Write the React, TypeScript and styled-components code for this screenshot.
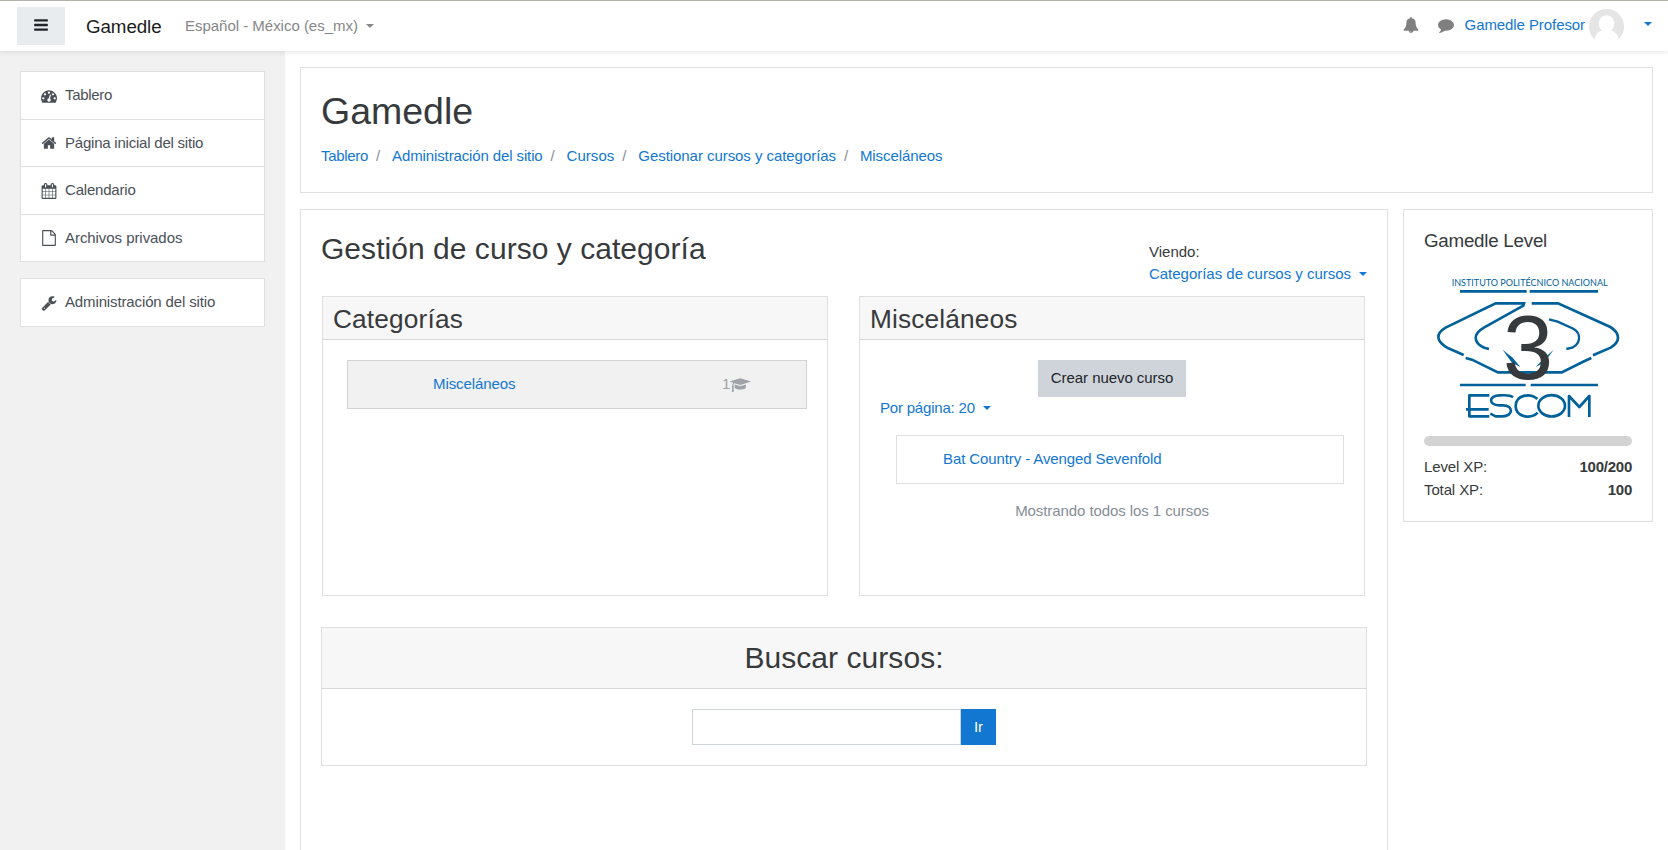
import React from 'react';
import styled, { createGlobalStyle } from 'styled-components';

const GlobalStyle = createGlobalStyle`
  *, *::before, *::after { box-sizing: border-box; }
  html, body, #root { height: 100%; }
  body {
    margin: 0;
    overflow: hidden;
    background: #fff;
    color: #373a3c;
    font: 15px/22.5px "Liberation Sans", Arial, sans-serif;
  }
`;

const glyphs = {
  bars: 'M1664 1344v128q0 26-19 45t-45 19h-1408q-26 0-45-19t-19-45v-128q0-26 19-45t45-19h1408q26 0 45 19t19 45zm0-512v128q0 26-19 45t-45 19h-1408q-26 0-45-19t-19-45v-128q0-26 19-45t45-19h1408q26 0 45 19t19 45zm0-512v128q0 26-19 45t-45 19h-1408q-26 0-45-19t-19-45v-128q0-26 19-45t45-19h1408q26 0 45 19t19 45z',
  dashboard: 'M384 1152q0-53-37.5-90.5t-90.5-37.5-90.5 37.5-37.5 90.5 37.5 90.5 90.5 37.5 90.5-37.5 37.5-90.5zm192-448q0-53-37.5-90.5t-90.5-37.5-90.5 37.5-37.5 90.5 37.5 90.5 90.5 37.5 90.5-37.5 37.5-90.5zm428 481l101-382q6-26-7.5-48.5t-38.5-29.5-48 6.5-30 39.5l-101 382q-60 5-107 43.5t-63 98.5q-20 77 20 146t117 89 146-20 89-117q16-60-6-117t-72-91zm660-33q0-53-37.5-90.5t-90.5-37.5-90.5 37.5-37.5 90.5 37.5 90.5 90.5 37.5 90.5-37.5 37.5-90.5zm-640-640q0-53-37.5-90.5t-90.5-37.5-90.5 37.5-37.5 90.5 37.5 90.5 90.5 37.5 90.5-37.5 37.5-90.5zm448 192q0-53-37.5-90.5t-90.5-37.5-90.5 37.5-37.5 90.5 37.5 90.5 90.5 37.5 90.5-37.5 37.5-90.5zm320 448q0 261-141 483-19 29-54 29h-1402q-35 0-54-29-141-221-141-483 0-182 71-348t191-286 286-191 348-71 348 71 286 191 191 286 71 348z',
  home: 'M1472 992v480q0 26-19 45t-45 19h-384v-384h-256v384h-384q-26 0-45-19t-19-45v-480q0-1 .5-3t.5-3l575-474 575 474q1 2 1 6zm223-69l-62 74q-8 9-21 11h-3q-13 0-21-7l-692-577-692 577q-12 8-24 7-13-2-21-11l-62-74q-8-10-7-23.5t11-21.5l719-599q32-26 76-26t76 26l244 204v-195q0-14 9-23t23-9h192q14 0 23 9t9 23v408l219 182q10 8 11 21.5t-7 23.5z',
  calendar: 'M192 1664h288v-288h-288v288zm352 0h320v-288h-320v288zm-352-352h288v-320h-288v320zm352 0h320v-320h-320v320zm-352-384h288v-288h-288v288zm736 736h320v-288h-320v288zm-384-736h320v-288h-320v288zm768 736h288v-288h-288v288zm-384-352h320v-320h-320v320zm-352-864v-288q0-13-9.5-22.5t-22.5-9.5h-64q-13 0-22.5 9.5t-9.5 22.5v288q0 13 9.5 22.5t22.5 9.5h64q13 0 22.5-9.5t9.5-22.5zm736 864h288v-320h-288v320zm-384-384h320v-288h-320v288zm384 0h288v-288h-288v288zm32-480v-288q0-13-9.5-22.5t-22.5-9.5h-64q-13 0-22.5 9.5t-9.5 22.5v288q0 13 9.5 22.5t22.5 9.5h64q13 0 22.5-9.5t9.5-22.5zm384-64v1280q0 52-38 90t-90 38h-1408q-52 0-90-38t-38-90v-1280q0-52 38-90t90-38h128v-96q0-66 47-113t113-47h64q66 0 113 47t47 113v96h384v-96q0-66 47-113t113-47h64q66 0 113 47t47 113v96h128q52 0 90 38t38 90z',
  file: 'M1596 380q28 28 48 76t20 88v1152q0 40-28 68t-68 28h-1344q-40 0-68-28t-28-68v-1600q0-40 28-68t68-28h896q40 0 88 20t76 48zm-444-244v376h376q-10-29-22-41l-313-313q-12-12-41-22zm384 1528v-1024h-416q-40 0-68-28t-28-68v-416h-768v1536h1280z',
  wrench: 'M448 1472q0-26-19-45t-45-19-45 19-19 45 19 45 45 19 45-19 19-45zm644-420l-682 682q-37 37-90 37-52 0-91-37l-106-108q-38-36-38-90 0-53 38-91l681-681q39 98 114.5 173.5t173.5 114.5zm634-435q0 39-23 106-47 134-164.5 217.5t-258.5 83.5q-185 0-316.5-131.5t-131.5-316.5 131.5-316.5 316.5-131.5q58 0 121.5 16.5t107.5 46.5q16 11 16 28t-16 28l-293 169v224l193 107q5-3 79-48.5t135.5-81 70.5-35.5q15 0 23.5 10t8.5 25z',
  bell: 'M912 1696q0-16-16-16-59 0-101.5-42.5t-42.5-101.5q0-16-16-16t-16 16q0 73 51.5 124.5t124.5 51.5q16 0 16-16zm816-288q0 52-38 90t-90 38h-448q0 106-75 181t-181 75-181-75-75-181h-448q-52 0-90-38t-38-90q50-42 91-88t85-119.5 74.5-158.5 50-206 19.5-260q0-152 117-282.5t307-158.5q-8-19-8-39 0-40 28-68t68-28 68 28 28 68q0 20-8 39 190 28 307 158.5t117 282.5q0 139 19.5 260t50 206 74.5 158.5 85 119.5 91 88z',
  comment: 'M1792 896q0 174-120 321.5t-326 233-450 85.5q-70 0-145-8-198 175-460 242-49 14-114 22-17 2-30.5-9t-17.5-29v-1q-3-4-.5-12t2-10 4.5-9.5l6-9 7-8.5 8-9q7-8 31-34.5t34.5-38 31-39.5 32.5-51 27-59 26-76q-157-89-247.5-220t-90.5-281q0-130 71-248.5t191-204.5 286-136.5 348-50.5q244 0 450 85.5t326 233 120 321.5z',
  graduation: 'M1774 836l18 316q4 69-82 128t-235 93.5-323 34.5-323-34.5-235-93.5-82-128l18-316 574 181q22 7 48 7t48-7zm530-324q0 23-22 31l-1120 352q-4 1-10 1t-10-1l-652-206q-43 34-71 111.5t-34 178.5q63 36 63 109 0 69-58 107l58 433q2 14-8 25-9 11-24 11h-192q-15 0-24-11-10-11-8-25l58-433q-58-38-58-107 0-73 65-111 11-207 98-330l-333-104q-22-8-22-31t22-31l1120-352q4-1 10-1t10 1l1120 352q22 8 22 31z',
};

type GlyphName = keyof typeof glyphs;

const Glyph = styled.svg`
  display: block;
  flex: none;
  fill: currentColor;
`;

function Icon({ name, wide = false }: { name: GlyphName; wide?: boolean }) {
  const units = wide ? 2304 : 1792;
  return (
    <Glyph width={(units / 1792) * 16} height={16} viewBox={`0 0 ${units} 1792`} aria-hidden>
      <path d={glyphs[name]} />
    </Glyph>
  );
}

const Label = styled.span<{ $track?: number }>`
  letter-spacing: ${p => p.$track ?? 0}px;
`;

const Link = styled.a<{ $track?: number }>`
  color: #1177d1;
  letter-spacing: ${p => p.$track ?? 0}px;
`;

const Page = styled.div`
  height: 850px;
  display: flex;
  flex-direction: column;
  overflow: hidden;
`;

const Navbar = styled.header`
  flex: none;
  height: 51px;
  display: flex;
  align-items: flex-start;
  border-top: 1px solid #b3b3ac;
  padding-left: 17px;
  background: #fff;
  box-shadow: 0 2px 4px rgba(0, 0, 0, 0.08);
  z-index: 1;
`;

const DrawerButton = styled.button`
  width: 48px;
  height: 38px;
  margin-top: 6px;
  padding: 0 0 2px;
  border: 0;
  background: #e9ecef;
  color: #212529;
  display: flex;
  align-items: center;
  justify-content: center;
`;

const Brand = styled.span`
  margin: 12px 0 0 21px;
  width: 99px;
  font-size: 18.75px;
  line-height: 28px;
  letter-spacing: -0.08px;
  color: #1b1c1d;
`;

const Caret = styled.span`
  display: inline-block;
  margin-left: 8px;
  vertical-align: 3.5px;
  border: 4.5px solid transparent;
  border-top-color: currentColor;
  border-bottom: 0;
`;

const Language = styled.span`
  margin-top: 14px;
  letter-spacing: -0.02px;
  color: #868686;
`;

const UserArea = styled.div`
  margin-left: auto;
  padding-right: 16px;
  display: flex;
  align-items: flex-start;
  color: #808080;
`;

const NavIcon = styled.span<{ $gap: number }>`
  margin: 16px ${p => p.$gap}px 0 0;
`;

const UserName = styled.span`
  margin-top: 13px;
  letter-spacing: -0.08px;
  color: #1177d1;
`;

const Avatar = styled.svg`
  margin: 8px 20px 0 4px;
`;

const UserCaret = styled(Caret)`
  margin: 21px 0 0;
  color: #1177d1;
`;

const Body = styled.div`
  flex: 1;
  min-height: 0;
  display: flex;
`;

const Drawer = styled.nav`
  flex: none;
  width: 285px;
  padding: 20px 20px 0;
  background: #f1f1f1;
`;

const LinkGroup = styled.ul`
  list-style: none;
  margin: 0 0 16px;
  padding: 0;
  background: #fff;
  border: 1px solid #dddfe0;
`;

const DrawerLink = styled.li`
  display: flex;
  align-items: center;
  gap: 8px;
  height: 47px;
  padding: 0 20px;
  color: #495057;
  & + & { border-top: 1px solid #dddfe0; }
  &:nth-child(3) { height: 48px; }
`;

const Content = styled.main`
  flex: 1;
  display: flex;
  flex-direction: column;
  padding: 16px 15px 0;
`;

const Card = styled.section`
  border: 1px solid #dddfe0;
  background: #fff;
`;

const HeaderCard = styled(Card)`
  flex: none;
  height: 126px;
  padding: 21px 20px 20px;
`;

const SiteTitle = styled.h1`
  margin: 0 0 11px;
  font-size: 37.5px;
  line-height: 45px;
  font-weight: 400;
`;

const Crumbs = styled.div`
  display: flex;
`;

const Crumb = styled.span`
  & + &::before {
    content: '/';
    margin: 0 11.8px 0 8px;
    color: #868e96;
  }
`;

const Columns = styled.div`
  flex: 1;
  min-height: 0;
  display: flex;
  align-items: flex-start;
  gap: 15px;
  padding-top: 16px;
`;

const MainCard = styled(Card)`
  flex: 1;
  height: 900px;
  padding: 20px;
`;

const TitleRow = styled.div`
  display: flex;
  justify-content: space-between;
  height: 66px;
`;

const PageTitle = styled.h2`
  margin: 1px 0 0;
  font-size: 30px;
  line-height: 36px;
  letter-spacing: 0.04px;
  font-weight: 400;
`;

const Viewing = styled.div`
  padding-top: 10.5px;
`;

const Listings = styled.div`
  display: flex;
  justify-content: space-between;
  padding: 0 2px 0 1px;
`;

const Listing = styled(Card)`
  width: 506px;
  height: 300px;
`;

const ListingTitle = styled.h3`
  margin: 0;
  height: 43px;
  padding: 7px 10px 0;
  border-bottom: 1px solid #d5d6d7;
  background: #f7f7f7;
  font-size: 26.25px;
  line-height: 31.5px;
  letter-spacing: 0.15px;
  font-weight: 400;
`;

const CategoryRow = styled.div`
  display: flex;
  align-items: center;
  justify-content: space-between;
  margin: 20px 20px 0 24px;
  height: 49px;
  padding: 0 55px 0 85px;
  border: 1px solid #d0d2d3;
  background: #f1f1f1;
`;

const Count = styled.span`
  display: flex;
  align-items: center;
  color: #a0a2a9;
`;

const CourseTools = styled.div`
  padding: 20px 20px 0;
`;

const CreateButton = styled.button`
  display: block;
  width: 148px;
  height: 37px;
  margin: 0 auto;
  padding: 0;
  border: 0;
  background: #ced4da;
  color: #212529;
  font: inherit;
  letter-spacing: -0.06px;
`;

const CourseRow = styled.div`
  margin: 15px 0 16px 16px;
  height: 49px;
  padding: 12px 46px;
  border: 1px solid #dddfe0;
`;

const Summary = styled.div`
  text-align: center;
  letter-spacing: -0.08px;
  color: #868e96;
`;

const SearchCard = styled(Card)`
  margin-top: 31px;
  height: 139px;
`;

const SearchTitle = styled.h2`
  margin: 0;
  height: 61px;
  padding-top: 12px;
  border-bottom: 1px solid #d5d6d7;
  background: #f7f7f7;
  text-align: center;
  font-size: 30px;
  line-height: 36px;
  letter-spacing: 0.06px;
  font-weight: 400;
`;

const SearchForm = styled.div`
  display: flex;
  justify-content: center;
  padding-top: 20px;
`;

const SearchInput = styled.input`
  width: 269px;
  height: 36px;
  border: 1px solid #ced4da;
  background: #fff;
`;

const SearchButton = styled.button`
  width: 35px;
  height: 36px;
  padding: 0;
  border: 0;
  background: #1177d1;
  color: #fff;
  font: inherit;
`;

const LevelCard = styled(Card)`
  flex: none;
  width: 250px;
  height: 313px;
  padding: 20px;
`;

const LevelTitle = styled.h5`
  margin: 0;
  font-size: 18.75px;
  line-height: 22.5px;
  letter-spacing: -0.24px;
  font-weight: 400;
`;

const Badge = styled.svg`
  display: block;
  margin: 22.5px 0 14px;
`;

const Progress = styled.div`
  height: 10px;
  margin-bottom: 10px;
  border-radius: 5px;
  background: #d3d3d3;
`;

const Stat = styled.div`
  display: flex;
  justify-content: space-between;
  letter-spacing: -0.12px;
`;

const StatValue = styled.b`
  letter-spacing: -0.25px;
`;

function LevelBadge({ level }: { level: number }) {
  return (
    <Badge width="208" height="147" viewBox="132 225 624 441" fill="none" stroke="#00619a" strokeWidth="8">
      <text x="215" y="257" textLength="468" lengthAdjust="spacingAndGlyphs" fontFamily="Lato, sans-serif" fontSize="27" fill="#00619a" stroke="none">
        INSTITUTO POLITÉCNICO NACIONAL
      </text>
      <path d="M240 274H440M449 274H654M240 555H437M452 555H654" />
      <path d="M251 465L205 445C167 424 166 401 197 383L347 310H432L430 317L313 382C279 401 278 428 313 443L327 447" />
      <path d="M455 310H534L691 381C722 400 721 426 692 443L639 466" />
      <path d="M507 358L533 365L580 386C606 401 600 430 579 442L559 447" strokeWidth="7" />
      <path d="M257 474L276 479L354 517H545L614 483L634 474" />
      <path d="M368 449L398 473L421 501L396 488Z M521 449L494 473L467 501L492 488Z" fill="#00619a" stroke="none" />
      <g strokeWidth="8" strokeLinejoin="round">
        <path d="M328 586H268V649H328M258 628H326" />
        <path d="M399 592C388 583 374 586 359 586C326 586 324 616 358 616H369C401 616 401 649 367 649H347L331 641" />
        <path d="M472 597C450 578 408 584 407 618C407 651 452 659 473 638" />
        <ellipse cx="515" cy="617.5" rx="40" ry="32" />
        <path d="M567 651V588L598 621L628 588V651" />
      </g>
      <text x="444" y="537" textAnchor="middle" fontSize="270" fill="#373a3c" stroke="none">{level}</text>
    </Badge>
  );
}

const drawerGroups: { icon: GlyphName; label: string; track: number }[][] = [
  [
    { icon: 'dashboard', label: 'Tablero', track: -0.3 },
    { icon: 'home', label: 'Página inicial del sitio', track: -0.22 },
    { icon: 'calendar', label: 'Calendario', track: -0.2 },
    { icon: 'file', label: 'Archivos privados', track: -0.06 },
  ],
  [{ icon: 'wrench', label: 'Administración del sitio', track: -0.13 }],
];

const crumbs = [
  { label: 'Tablero', track: -0.3 },
  { label: 'Administración del sitio', track: -0.12 },
  { label: 'Cursos', track: 0.04 },
  { label: 'Gestionar cursos y categorías', track: -0.055 },
  { label: 'Misceláneos', track: -0.08 },
];

export default function App() {
  return (
    <Page>
      <GlobalStyle />
      <Navbar>
        <DrawerButton><Icon name="bars" /></DrawerButton>
        <Brand>Gamedle</Brand>
        <Language>Español - México (es_mx)<Caret /></Language>
        <UserArea>
          <NavIcon $gap={19}><Icon name="bell" /></NavIcon>
          <NavIcon $gap={10.5}><Icon name="comment" /></NavIcon>
          <UserName>Gamedle Profesor</UserName>
          <Avatar width="35" height="35" viewBox="0 0 35 35">
            <circle cx="17.5" cy="17.5" r="17.5" fill="#e5e5e5" />
            <path d="M17.5 6.2C22 6.2 25.3 9.8 25.3 14.2C25.3 17.4 24 20 22 21.5C26.3 22.5 29 26 29.6 30.5V35H5.8V30.5C6.2 26 8.7 22.5 13 21.5C11 20 9.9 17.4 9.9 14.2C9.9 9.8 13 6.2 17.5 6.2Z" fill="#fff" />
          </Avatar>
          <UserCaret />
        </UserArea>
      </Navbar>
      <Body>
        <Drawer>
          {drawerGroups.map((group, i) => (
            <LinkGroup key={i}>
              {group.map(item => (
                <DrawerLink key={item.label}>
                  <Icon name={item.icon} />
                  <Label $track={item.track}>{item.label}</Label>
                </DrawerLink>
              ))}
            </LinkGroup>
          ))}
        </Drawer>
        <Content>
          <HeaderCard>
            <SiteTitle>Gamedle</SiteTitle>
            <Crumbs>
              {crumbs.map(c => <Crumb key={c.label}><Link $track={c.track}>{c.label}</Link></Crumb>)}
            </Crumbs>
          </HeaderCard>
          <Columns>
            <MainCard>
              <TitleRow>
                <PageTitle>Gestión de curso y categoría</PageTitle>
                <Viewing>
                  <div>Viendo:</div>
                  <Link $track={-0.02}>Categorías de cursos y cursos<Caret /></Link>
                </Viewing>
              </TitleRow>
              <Listings>
                <Listing>
                  <ListingTitle>Categorías</ListingTitle>
                  <CategoryRow>
                    <Link $track={-0.08}>Misceláneos</Link>
                    <Count>1<Icon name="graduation" wide /></Count>
                  </CategoryRow>
                </Listing>
                <Listing>
                  <ListingTitle>Misceláneos</ListingTitle>
                  <CourseTools>
                    <CreateButton>Crear nuevo curso</CreateButton>
                    <Link $track={-0.2}>Por página: 20<Caret /></Link>
                    <CourseRow><Link $track={-0.1}>Bat Country - Avenged Sevenfold</Link></CourseRow>
                    <Summary>Mostrando todos los 1 cursos</Summary>
                  </CourseTools>
                </Listing>
              </Listings>
              <SearchCard>
                <SearchTitle>Buscar cursos:</SearchTitle>
                <SearchForm>
                  <SearchInput aria-label="Buscar cursos" />
                  <SearchButton>Ir</SearchButton>
                </SearchForm>
              </SearchCard>
            </MainCard>
            <LevelCard>
              <LevelTitle>Gamedle Level</LevelTitle>
              <LevelBadge level={3} />
              <Progress />
              <Stat>Level XP:<StatValue>100/200</StatValue></Stat>
              <Stat>Total XP:<StatValue>100</StatValue></Stat>
            </LevelCard>
          </Columns>
        </Content>
      </Body>
    </Page>
  );
}
